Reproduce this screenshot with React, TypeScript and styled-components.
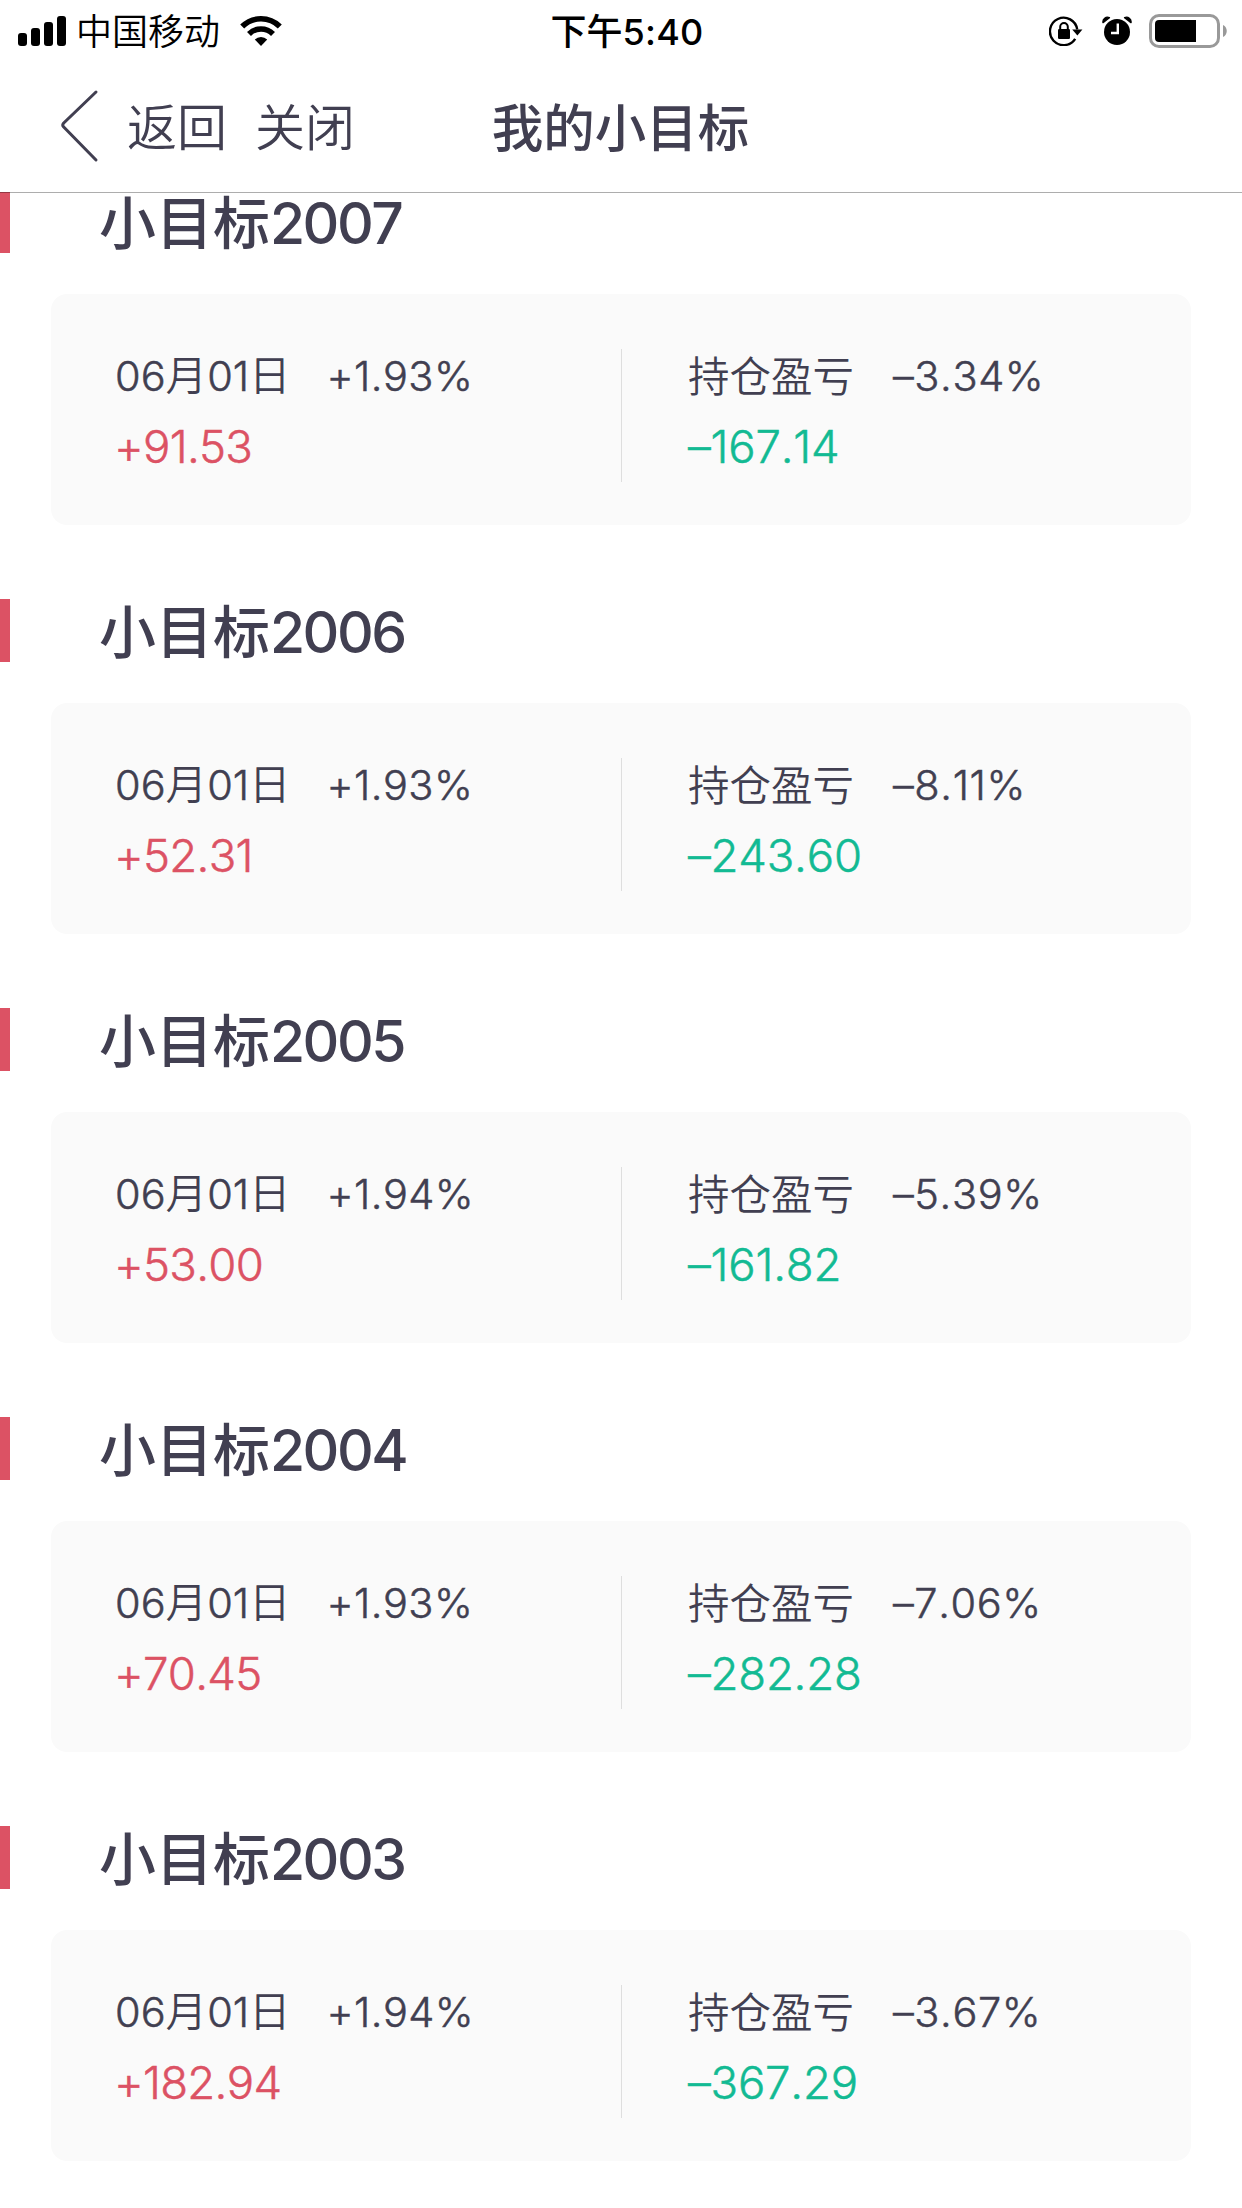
import React from 'react';
import styled, { createGlobalStyle } from 'styled-components';

const GlobalStyle = createGlobalStyle`
  * { box-sizing: border-box; }
  body {
    margin: 0;
    background: #fff;
    font-family: Inter, 'Noto Sans CJK SC', sans-serif;
    font-kerning: none;
    color: #413f51;
  }
`;

const Page = styled.div`
  width: 1242px;
  height: 2208px;
  display: flex;
  flex-direction: column;
  overflow: hidden;
  background: #fff;
`;

const StatusBar = styled.div`
  flex: none;
  height: 60px;
  padding: 0 14px 0 18px;
  display: grid;
  grid-template-columns: 1fr auto 1fr;
  align-items: center;
  color: #000;
  font-size: 36px;
  line-height: 60px;
  white-space: nowrap;
`;

const StatusLeft = styled.div`
  display: flex;
  align-items: center;
`;

const StatusRight = styled.div`
  display: flex;
  align-items: center;
  justify-content: flex-end;
`;

const Carrier = styled.span`
  margin: 0 20px 0 10px;
  padding-top: 2px;
  font-weight: 350;
`;

const Time = styled.span`
  font-weight: 500;
  padding: 1px 0 0 8px;
`;

const NavBar = styled.header`
  flex: none;
  height: 133px;
  position: relative;
  z-index: 1;
  padding: 0 42px 0 41px;
  display: grid;
  grid-template-columns: 1fr auto 1fr;
  align-items: center;
  border-bottom: 1px solid rgba(0, 0, 0, 0.32);
  background: #fff;
  background-clip: padding-box;
  white-space: nowrap;
`;

const NavActions = styled.div`
  display: flex;
  align-items: center;
  font-size: 50px;
  line-height: 72px;
  font-weight: 350;
`;

const NavLabel = styled.span<{ $before: number }>`
  margin-left: ${(p) => p.$before}px;
  padding-top: 4px;
`;

const NavTitle = styled.h1`
  margin: 0;
  padding-top: 3px;
  font-size: 51.5px;
  line-height: 72px;
  font-weight: 500;
`;

const Scroller = styled.main`
  flex: 1;
  min-height: 0;
  margin-top: -1px;
`;

const GoalList = styled.div`
  margin-top: -2px;
`;

const Goal = styled.section`
  height: 409px;
`;

const GoalHead = styled.div`
  height: 63px;
  margin-bottom: 41px;
  padding: 2px 0 0 89px;
  border-left: 10px solid #dc5264;
`;

const GoalName = styled.h2`
  margin: 0;
  font-size: 57px;
  line-height: 63px;
  font-weight: 500;
  white-space: nowrap;
`;

const Card = styled.div`
  height: 231px;
  margin: 0 51px;
  border-radius: 16px;
  background: #fafafa;
  display: grid;
  grid-template-columns: 570px 1px 1fr;
`;

const Divider = styled.div`
  height: 133px;
  margin-top: 55px;
  background: #dedede;
`;

const Column = styled.div<{ $inset: number }>`
  padding: 52px 0 0 ${(p) => p.$inset}px;
  white-space: nowrap;
`;

const Line = styled.div<{ $gap: number }>`
  display: flex;
  gap: ${(p) => p.$gap}px;
  height: 61px;
  font-size: 41.5px;
  line-height: 61px;
  font-weight: 350;
`;

const Label = styled.span`
  padding-top: 1px;
`;

const Amount = styled.div<{ $up: boolean }>`
  margin-left: ${(p) => (p.$up ? -1 : 0)}px;
  font-size: 45.5px;
  font-weight: 300;
  line-height: 80px;
  letter-spacing: ${(p) => (p.$up ? -0.7 : -0.2)}px;
  -webkit-text-stroke: 0.5px currentColor;
  color: ${(p) => (p.$up ? '#dc5264' : '#12ba93')};
`;

const Digits = styled.span<{ $track: number }>`
  letter-spacing: ${(p) => p.$track}px;
`;

const Figure = styled(Digits)`
  font-weight: 300;
  -webkit-text-stroke: 0.5px currentColor;
`;

const SignalIcon = () => (
  <svg width="48" height="30" viewBox="0 0 48 30">
    <rect x="0" y="17" width="9" height="13" rx="3" />
    <rect x="13" y="12" width="9" height="18" rx="3" />
    <rect x="26" y="6" width="9" height="24" rx="3" />
    <rect x="39" y="0" width="9" height="30" rx="3" />
  </svg>
);

const WifiIcon = () => (
  <svg width="42" height="30" viewBox="0 0 42 30">
    <g fill="none" stroke="#000" strokeWidth="5.6">
      <path d="M2.2 10.6A26.6 26.6 0 0 1 39.8 10.6" />
      <path d="M9 17.9A17 17 0 0 1 33 17.9" />
    </g>
    <path d="M14.8 23.6A8.8 8.8 0 0 1 27.2 23.6L21 30Z" />
  </svg>
);

const RotationLockIcon = () => (
  <svg width="34" height="30" viewBox="0 0 34 30">
    <path d="M26.2 22.8A13.7 13.7 0 1 1 28.2 13.4" fill="none" stroke="#000" strokeWidth="2.4" />
    <path d="M23.2 13.6H33.4L28.4 19.6Z" />
    <rect x="9" y="13" width="12" height="10" rx="1.2" />
    <path d="M11.2 14V10.8A3.8 3.8 0 0 1 18.8 10.8V14" fill="none" stroke="#000" strokeWidth="2" />
  </svg>
);

const AlarmIcon = () => (
  <svg width="30" height="30" viewBox="0 0 30 30">
    <circle cx="15" cy="16" r="13" />
    <path d="M1 6.6A4.6 4.6 0 0 1 7.4 1.6Z" stroke="#000" strokeWidth="1.4" strokeLinejoin="round" />
    <path d="M29 6.6A4.6 4.6 0 0 0 22.6 1.6Z" stroke="#000" strokeWidth="1.4" strokeLinejoin="round" />
    <path d="M15.8 7.4V17H9" fill="none" stroke="#fff" strokeWidth="2.4" />
  </svg>
);

const BatteryIcon = () => (
  <svg width="79" height="34" viewBox="0 0 79 34">
    <rect x="1.5" y="1.5" width="68" height="31" rx="8.5" fill="none" stroke="#999" strokeWidth="3" />
    <path d="M10 6H47V28H10A4 4 0 0 1 6 24V10A4 4 0 0 1 10 6Z" />
    <path d="M74 11C79 13 79 21 74 23Z" fill="#999" />
  </svg>
);

const RightIcon = styled.span<{ $after: number }>`
  display: flex;
  margin-right: ${(p) => p.$after}px;
`;

const Chevron = () => (
  <svg width="60" height="74" viewBox="0 0 60 74">
    <path
      d="M55 3L22.5 34.2Q21 36 22.5 37.8L55 71"
      fill="none"
      stroke="#413f51"
      strokeWidth="3"
      strokeLinecap="round"
    />
  </svg>
);

const goals = [
  { year: '2007', dayPct: '+1.93%', day: '+91.53', heldPct: '–3.34%', held: '–167.14' },
  { year: '2006', dayPct: '+1.93%', day: '+52.31', heldPct: '–8.11%', held: '–243.60' },
  { year: '2005', dayPct: '+1.94%', day: '+53.00', heldPct: '–5.39%', held: '–161.82' },
  { year: '2004', dayPct: '+1.93%', day: '+70.45', heldPct: '–7.06%', held: '–282.28' },
  { year: '2003', dayPct: '+1.94%', day: '+182.94', heldPct: '–3.67%', held: '–367.29' },
];

export default function App() {
  return (
    <Page lang="zh-CN">
      <GlobalStyle />
      <StatusBar>
        <StatusLeft>
          <SignalIcon />
          <Carrier>中国移动</Carrier>
          <WifiIcon />
        </StatusLeft>
        <Time>
          下午<Digits $track={0.3}>5:40</Digits>
        </Time>
        <StatusRight>
          <RightIcon $after={19}>
            <RotationLockIcon />
          </RightIcon>
          <RightIcon $after={17}>
            <AlarmIcon />
          </RightIcon>
          <BatteryIcon />
        </StatusRight>
      </StatusBar>
      <NavBar>
        <NavActions>
          <Chevron />
          <NavLabel $before={26}>返回</NavLabel>
          <NavLabel $before={28}>关闭</NavLabel>
        </NavActions>
        <NavTitle>我的小目标</NavTitle>
      </NavBar>
      <Scroller>
        <GoalList>
          {goals.map((g) => (
            <Goal key={g.year}>
              <GoalHead>
                <GoalName>
                  小目标<Digits $track={-2.5}>{g.year}</Digits>
                </GoalName>
              </GoalHead>
              <Card>
                <Column $inset={64}>
                  <Line $gap={36}>
                    <span>
                      <Figure $track={0}>06</Figure>月<Figure $track={0}>01</Figure>日
                    </span>
                    <Figure $track={0.4}>{g.dayPct}</Figure>
                  </Line>
                  <Amount $up>{g.day}</Amount>
                </Column>
                <Divider />
                <Column $inset={66}>
                  <Line $gap={39}>
                    <Label>持仓盈亏</Label>
                    <Figure $track={0.6}>{g.heldPct}</Figure>
                  </Line>
                  <Amount $up={false}>{g.held}</Amount>
                </Column>
              </Card>
            </Goal>
          ))}
        </GoalList>
      </Scroller>
    </Page>
  );
}
